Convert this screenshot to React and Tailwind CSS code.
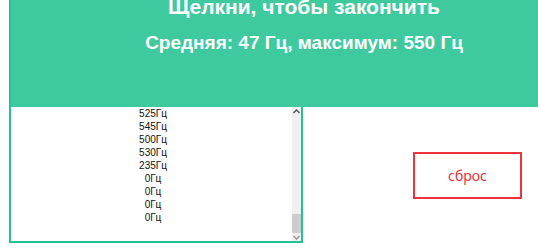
import React from "react";

const items = ["525Гц", "545Гц", "500Гц", "530Гц", "235Гц", "0Гц", "0Гц", "0Гц", "0Гц"];

export default function App() {
  return (
    <div className="w-[538px] h-[248px] overflow-hidden bg-white pl-[9px]" style={{ fontFamily: '"Liberation Sans", Arial, sans-serif' }}>
      <div className="w-[588px] h-[107px] bg-[#3fc99f] border-l-2 border-[#24c191] flex flex-col items-center text-white font-bold">
        <div className="text-[21px] leading-[26px] mt-[-6px]">Щелкни, чтобы закончить</div>
        <div className="text-[19px] leading-[22px] mt-[12px]">Средняя: 47 Гц, максимум: 550 Гц</div>
      </div>
      <div className="flex items-center">
        <div className="w-[294px] h-[136px] border-2 border-t-0 border-[#24c191] flex">
          <div className="flex-1 flex flex-col items-center pl-[3px] text-[10px] leading-[13px] text-[#111]">
            {items.map((t, i) => (
              <div key={i}>{t}</div>
            ))}
          </div>
          <div className="w-[9px] bg-[#f0f0f0] flex flex-col">
            <div className="h-[8px] flex items-center justify-center">
              <svg width="7" height="5" viewBox="0 0 7 5"><path d="M0.5 4 L3.5 1 L6.5 4" fill="none" stroke="#505050" strokeWidth="1.3" /></svg>
            </div>
            <div className="flex-1 flex flex-col justify-end">
              <div className="h-[19px] bg-[#cdcdcd]"></div>
            </div>
            <div className="h-[8px] flex items-center justify-center">
              <svg width="7" height="5" viewBox="0 0 7 5"><path d="M0.5 1 L3.5 4 L6.5 1" fill="none" stroke="#909090" strokeWidth="1.3" /></svg>
            </div>
          </div>
        </div>
        <button className="ml-[110px] w-[109px] h-[47px] border-2 border-[#ee333d] bg-white text-[#e8303a] text-[14px] flex items-center justify-center" style={{ fontFamily: '"Noto Sans", "Open Sans", sans-serif' }}>
          сброс
        </button>
      </div>
    </div>
  );
}
